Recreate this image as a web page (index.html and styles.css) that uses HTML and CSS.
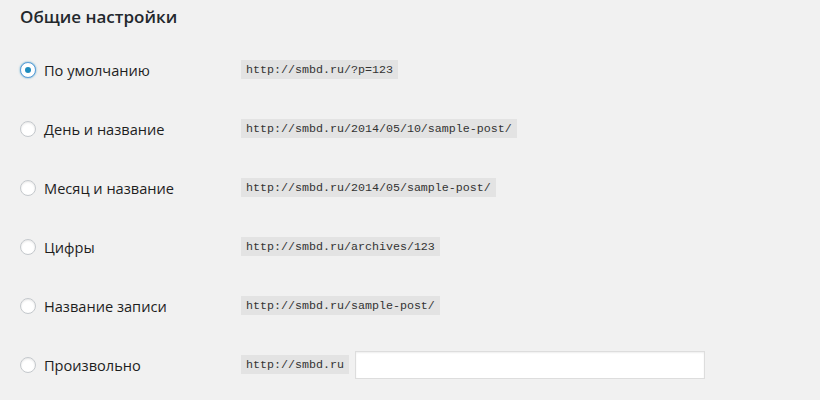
FILE: index.html
```html
<!DOCTYPE html>
<html lang="ru">
<head>
<meta charset="utf-8">
<link rel="stylesheet" href="styles.css">
</head>
<body>
<div class="page">
  <h2 class="title">Общие настройки</h2>
  <div class="options">
    <div class="row">
      <label class="label"><span class="radio checked"></span>По умолчанию</label>
      <code class="code">http://smbd.ru/?p=123</code>
    </div>
    <div class="row">
      <label class="label"><span class="radio"></span>День и название</label>
      <code class="code">http://smbd.ru/2014/05/10/sample-post/</code>
    </div>
    <div class="row">
      <label class="label"><span class="radio"></span>Месяц и название</label>
      <code class="code">http://smbd.ru/2014/05/sample-post/</code>
    </div>
    <div class="row">
      <label class="label"><span class="radio"></span>Цифры</label>
      <code class="code">http://smbd.ru/archives/123</code>
    </div>
    <div class="row">
      <label class="label"><span class="radio"></span>Название записи</label>
      <code class="code">http://smbd.ru/sample-post/</code>
    </div>
    <div class="row">
      <label class="label"><span class="radio"></span>Произвольно</label>
      <code class="code">http://smbd.ru</code>
      <span class="input"></span>
    </div>
  </div>
</div>
</body>
</html>
```
FILE: styles.css
```css
html, body {
  margin: 0;
  padding: 0;
  background: #f1f1f1;
}
body {
  font-family: "Open Sans", "Noto Sans", sans-serif;
  color: #222;
}
.page {
  padding: 0 20px;
  width: 780px;
  height: 400px;
  overflow: hidden;
}
.title {
  margin: 0;
  height: 40px;
  padding-top: 4px;
  box-sizing: border-box;
  font-size: 17px;
  font-weight: 600;
  line-height: 26px;
  color: #23282d;
}
.options {
  display: flex;
  flex-direction: column;
}
.row {
  height: 59px;
  display: flex;
  align-items: center;
}
.label {
  width: 221px;
  display: flex;
  align-items: center;
  gap: 8px;
  font-size: 14.6px;
  color: #1e1e1e;
}
.radio {
  width: 14px;
  height: 14px;
  border: 1px solid #c4c8cc;
  border-radius: 50%;
  background: #fff;
  box-shadow: inset 0 1px 2px rgba(0,0,0,0.1);
  display: flex;
  align-items: center;
  justify-content: center;
  flex: none;
}
.radio.checked {
  border-color: #5b9dd9;
  box-shadow: 0 0 2px rgba(30,140,190,0.8);
}
.radio.checked::after {
  content: "";
  width: 6px;
  height: 6px;
  border-radius: 50%;
  background: #1e8cbe;
}
.code {
  font-family: "Liberation Mono", "DejaVu Sans Mono", monospace;
  font-size: 11.67px;
  line-height: 14px;
  padding: 3px 5px 2px;
  background: #e3e3e3;
  color: #333;
}
.input {
  display: block;
  margin-left: 6px;
  width: 348px;
  height: 26px;
  border: 1px solid #ddd;
  background: #fff;
  box-shadow: inset 0 1px 2px rgba(0,0,0,0.07);
}
```
